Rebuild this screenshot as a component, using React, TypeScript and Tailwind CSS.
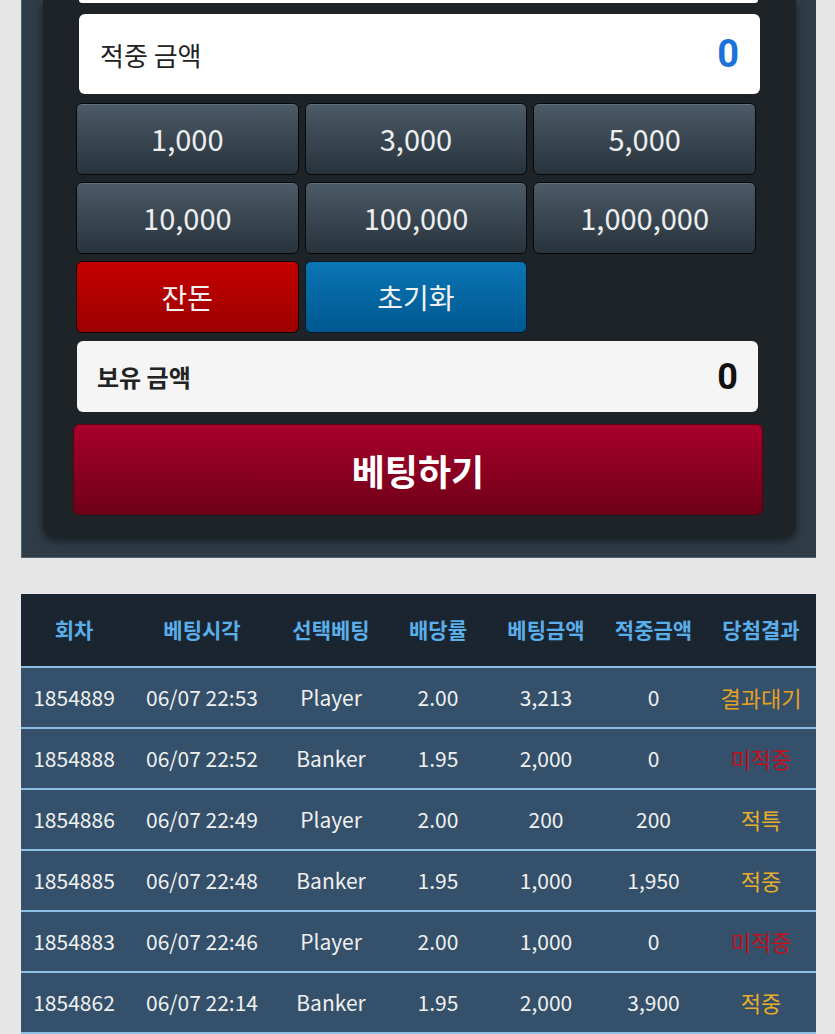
import React from "react";

const KR = "font-['Noto_Sans_CJK_KR','Noto_Sans',sans-serif]";

const amounts = ["1,000", "3,000", "5,000", "10,000", "100,000", "1,000,000"];

type Row = {
  round: string;
  time: string;
  pick: string;
  odds: string;
  bet: string;
  win: string;
  result: string;
  tone: "wait" | "lose" | "win";
};

const rows: Row[] = [
  { round: "1854889", time: "06/07 22:53", pick: "Player", odds: "2.00", bet: "3,213", win: "0", result: "결과대기", tone: "wait" },
  { round: "1854888", time: "06/07 22:52", pick: "Banker", odds: "1.95", bet: "2,000", win: "0", result: "미적중", tone: "lose" },
  { round: "1854886", time: "06/07 22:49", pick: "Player", odds: "2.00", bet: "200", win: "200", result: "적특", tone: "win" },
  { round: "1854885", time: "06/07 22:48", pick: "Banker", odds: "1.95", bet: "1,000", win: "1,950", result: "적중", tone: "win" },
  { round: "1854883", time: "06/07 22:46", pick: "Player", odds: "2.00", bet: "1,000", win: "0", result: "미적중", tone: "lose" },
  { round: "1854862", time: "06/07 22:14", pick: "Banker", odds: "1.95", bet: "2,000", win: "3,900", result: "적중", tone: "win" },
];

const toneClass = {
  wait: "text-[#e6a11f]",
  lose: "text-[#c3101c]",
  win: "text-[#e9ad2a]",
};

const headers = ["회차", "베팅시각", "선택베팅", "배당률", "베팅금액", "적중금액", "당첨결과"];

const COLS = "grid grid-cols-[106px_150px_108px_106px_110px_105px_110px]";

const BetPanel = () => (
  <div className="ml-[21px] mr-[19px] h-[558px] bg-[#303d48] border-l border-b border-[#56636e]">
    <div className="ml-[21px] mr-[20px] h-[537px] bg-[#1d2326] rounded-b-xl shadow-[0_4px_10px_rgba(0,0,0,0.55)] flex flex-col">
      <div className="ml-[36px] mr-[38px] h-[3px] bg-white rounded-b-md" />

      <div className="mt-[11px] ml-[36px] mr-[36px] h-[80px] bg-white rounded-md flex items-center justify-between pl-[21px] pr-[21px]">
        <span className={`${KR} text-[26px] text-[#222]`}>적중 금액</span>
        <span className="font-['Roboto',sans-serif] font-bold text-[38px] text-[#1a73d9]">0</span>
      </div>

      <div className="mt-[9px] ml-[33px] mr-[40px] grid grid-cols-3 gap-x-[6px] gap-y-[7px]">
        {amounts.map((a) => (
          <button
            key={a}
            className={`${KR} h-[72px] rounded-md border border-[#06090b] bg-gradient-to-b from-[#4c5b68] to-[#28333c] text-[29px] text-[#eeeeee] shadow-[inset_0_1px_0_rgba(255,255,255,0.12)]`}
          >
            {a}
          </button>
        ))}
        <button
          className={`${KR} h-[72px] rounded-md border border-[#1a0000] bg-gradient-to-b from-[#c40000] to-[#9c0000] text-[28px] text-[#f2f2f2]`}
        >
          잔돈
        </button>
        <button
          className={`${KR} h-[72px] rounded-md border border-[#041a2a] bg-gradient-to-b from-[#0b75b4] to-[#005891] text-[28px] text-[#f2f2f2]`}
        >
          초기화
        </button>
      </div>

      <div className="mt-[8px] ml-[34px] mr-[38px] h-[71px] bg-[#f5f5f5] rounded-md flex items-center justify-between pl-[20px] pr-[20px]">
        <span className={`${KR} font-bold text-[24px] text-[#222]`}>보유 금액</span>
        <span className="font-['Roboto',sans-serif] font-bold text-[36px] text-[#111]">0</span>
      </div>

      <button
        className={`${KR} mt-[12px] ml-[30px] mr-[33px] h-[91px] rounded-md border border-[#5a0012] bg-gradient-to-b from-[#a8002b] to-[#6f0018] font-bold text-[36px] text-white`}
      >
        베팅하기
      </button>
    </div>
  </div>
);

const HistoryTable = () => (
  <div className={`${KR} mt-[36px] ml-[21px] mr-[19px]`}>
    <div className={`${COLS} h-[72px] bg-[#1b2530] items-center text-center`}>
      {headers.map((h) => (
        <span key={h} className="font-bold text-[21px] text-[#5aaeea]">
          {h}
        </span>
      ))}
    </div>
    {rows.map((r) => (
      <div
        key={r.round}
        className={`${COLS} h-[61px] border-t-2 border-[#8bbfe3] bg-[#34506a] items-center text-center text-[21px] text-[#f0f0f0]`}
      >
        <span>{r.round}</span>
        <span>{r.time}</span>
        <span>{r.pick}</span>
        <span>{r.odds}</span>
        <span>{r.bet}</span>
        <span>{r.win}</span>
        <span className={`text-[22px] ${toneClass[r.tone]}`}>{r.result}</span>
      </div>
    ))}
    <div className="h-[2px] bg-[#8bbfe3]" />
  </div>
);

export default function App() {
  return (
    <div className="min-h-screen bg-[#e6e6e6] overflow-hidden">
      <BetPanel />
      <HistoryTable />
    </div>
  );
}
